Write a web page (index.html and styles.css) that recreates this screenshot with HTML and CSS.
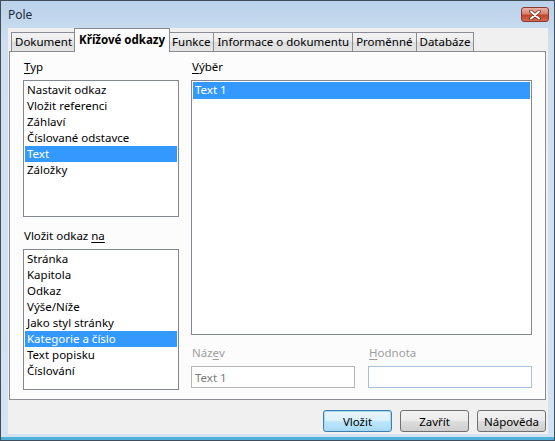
FILE: index.html
```html
<!DOCTYPE html>
<html lang="cs">
<head>
    <meta charset="UTF-8">
    <title>Pole</title>
    <link rel="stylesheet" href="styles.css">
</head>
<body>
<div class="window">
    <div class="titlebar">
        <span class="title">Pole</span>
        <button class="close" type="button">
            <svg width="14" height="10" viewBox="0 0 14 10">
                <path d="M3 1.5 L11 8.5 M11 1.5 L3 8.5" stroke="#6b2a20" stroke-width="3.6" stroke-linecap="round"/>
                <path d="M3 1.5 L11 8.5 M11 1.5 L3 8.5" stroke="#fff" stroke-width="2" stroke-linecap="round"/>
            </svg>
        </button>
    </div>

    <div class="client">
        <div class="tabs">
            <div class="tab">Dokument</div>
            <div class="tab active">Křížové odkazy</div>
            <div class="tab">Funkce</div>
            <div class="tab">Informace o dokumentu</div>
            <div class="tab">Proměnné</div>
            <div class="tab">Databáze</div>
        </div>

        <div class="page">
            <div class="col-left">
                <div class="label"><u>T</u>yp</div>
                <ul class="list list-typ">
                    <li>Nastavit odkaz</li>
                    <li>Vložit referenci</li>
                    <li>Záhlaví</li>
                    <li>Číslované odstavce</li>
                    <li class="sel">Text</li>
                    <li>Záložky</li>
                </ul>

                <div class="label label-gap">Vložit odkaz <u>na</u></div>
                <ul class="list list-na">
                    <li>Stránka</li>
                    <li>Kapitola</li>
                    <li>Odkaz</li>
                    <li>Výše/Níže</li>
                    <li>Jako styl stránky</li>
                    <li class="sel">Kategorie a číslo</li>
                    <li>Text popisku</li>
                    <li>Číslování</li>
                </ul>
            </div>

            <div class="col-right">
                <div class="label"><u>V</u>ýběr</div>
                <ul class="list list-vyber">
                    <li class="sel">Text 1</li>
                </ul>

                <div class="fields">
                    <div class="field">
                        <div class="label disabled">Náz<u>e</u>v</div>
                        <input class="edit edit-off" type="text" value="Text 1" disabled>
                    </div>
                    <div class="field">
                        <div class="label disabled"><u>H</u>odnota</div>
                        <input class="edit" type="text" value="">
                    </div>
                </div>
            </div>
        </div>

        <div class="buttons">
            <button class="btn default" type="button">Vložit</button>
            <button class="btn" type="button">Zavřít</button>
            <button class="btn" type="button">Nápověda</button>
        </div>
    </div>
</div>
</body>
</html>
```

FILE: styles.css
```css
body{
    margin: 0;
    font-family: "Noto Sans", "Open Sans", sans-serif;
    font-size: 11.5px;
    color: #000;
}

.window{
    width: 555px;
    height: 441px;
    box-sizing: border-box;
    border: 1px solid #3f4d5c;
    background: linear-gradient(to bottom, #b9d1ea 0px, #cfdff0 40px, #d4e3f3 100%);
    box-shadow: inset 0 -3px 0 #4fb0d8;
    display: flex;
    flex-direction: column;
}

/* title bar */
.titlebar{
    height: 27px;
    display: flex;
    align-items: center;
    padding-left: 7px;
    position: relative;
}
.title{
    font-size: 12px;
    color: #1e2b3a;
}
.close{
    position: absolute;
    right: 5px;
    top: 6px;
    width: 28px;
    height: 15px;
    padding: 0;
    border: 1px solid #8a3a2e;
    border-radius: 3px;
    background: linear-gradient(to bottom, #e9b3a8 0%, #d9826f 45%, #c2432b 55%, #d36a4e 100%);
    display: flex;
    align-items: center;
    justify-content: center;
}

/* client area */
.client{
    flex: 1;
    margin: 0 6px 6px 7px;
    background: #f0f0f0;
    display: flex;
    flex-direction: column;
}

.tabs{
    display: flex;
    align-items: flex-end;
    height: 23px;
    margin-left: 3px;
    position: relative;
    z-index: 1;
}
.tab{
    height: 18px;
    line-height: 18px;
    padding: 0 3px;
    border: 1px solid #898c95;
    border-bottom: none;
    margin-right: -1px;
    background: linear-gradient(to bottom, #f3f3f3 0%, #ebebeb 50%, #dcdcdc 51%, #e6e6e6 100%);
    white-space: nowrap;
}
.tab.active{
    height: 23px;
    line-height: 22px;
    font-weight: bold;
    background: #fcfcfc;
    margin-bottom: -1px;
    margin-left: -1px;
    margin-right: -2px;
    position: relative;
    z-index: 2;
    padding: 0 4px 0 4px;
}

/* tab page */
.page{
    height: 349px;
    box-sizing: border-box;
    margin: 0 2px 0 1px;
    border: 1px solid #898c95;
    background: #fcfcfc;
    padding: 7px 13px 0 13px;
    display: flex;
    gap: 12px;
}

.label{
    height: 16px;
    line-height: 16px;
    padding-left: 1px;
    margin-bottom: 5px;
}
.label u{
    text-underline-offset: 2px;
}
.label-gap{
    margin-top: 11px;
}
.disabled{
    color: #a0a0a0;
}

.col-left{
    width: 156px;
    display: flex;
    flex-direction: column;
}
.col-right{
    flex: 1;
    display: flex;
    flex-direction: column;
}

.list{
    list-style: none;
    margin: 0;
    padding: 1px;
    border: 1px solid #828790;
    background: #fff;
}
.list li{
    height: 16px;
    line-height: 16px;
    padding-left: 2px;
    white-space: nowrap;
}
.list li.sel{
    background: #3399ff;
    color: #fff;
}
.list-typ{
    height: 137px;
    box-sizing: border-box;
}
.list-na{
    height: 141px;
    box-sizing: border-box;
}
.list-vyber{
    height: 255px;
    box-sizing: border-box;
}
.list-vyber li.sel{
    height: 17px;
}

.fields{
    display: flex;
    gap: 13px;
    margin-top: 10px;
}
.field{
    flex: 1;
}
.edit{
    display: block;
    width: 100%;
    height: 22px;
    box-sizing: border-box;
    border: 1px solid #abc0d8;
    background: #fff;
    font: inherit;
    padding: 0 3px;
    margin-top: 1px;
}
.edit-off{
    border-color: #b5b5b5;
    color: #7a7a7a;
}

/* dialog buttons */
.buttons{
    display: flex;
    justify-content: flex-end;
    gap: 8px;
    padding: 10px 2px 0 0;
}
.btn{
    width: 69px;
    height: 22px;
    font: inherit;
    border: 1px solid #707070;
    border-radius: 3px;
    background: linear-gradient(to bottom, #f2f2f2 0%, #ebebeb 50%, #dddddd 51%, #cfcfcf 100%);
    padding: 0;
    color: #000;
}
.btn.default{
    border-color: #3c7fb1;
    box-shadow: inset 0 0 0 1px #a8d8f0;
    background: linear-gradient(to bottom, #eaf6fd 0%, #d9f0fc 50%, #bee6fd 51%, #a7d9f5 100%);
}
```
